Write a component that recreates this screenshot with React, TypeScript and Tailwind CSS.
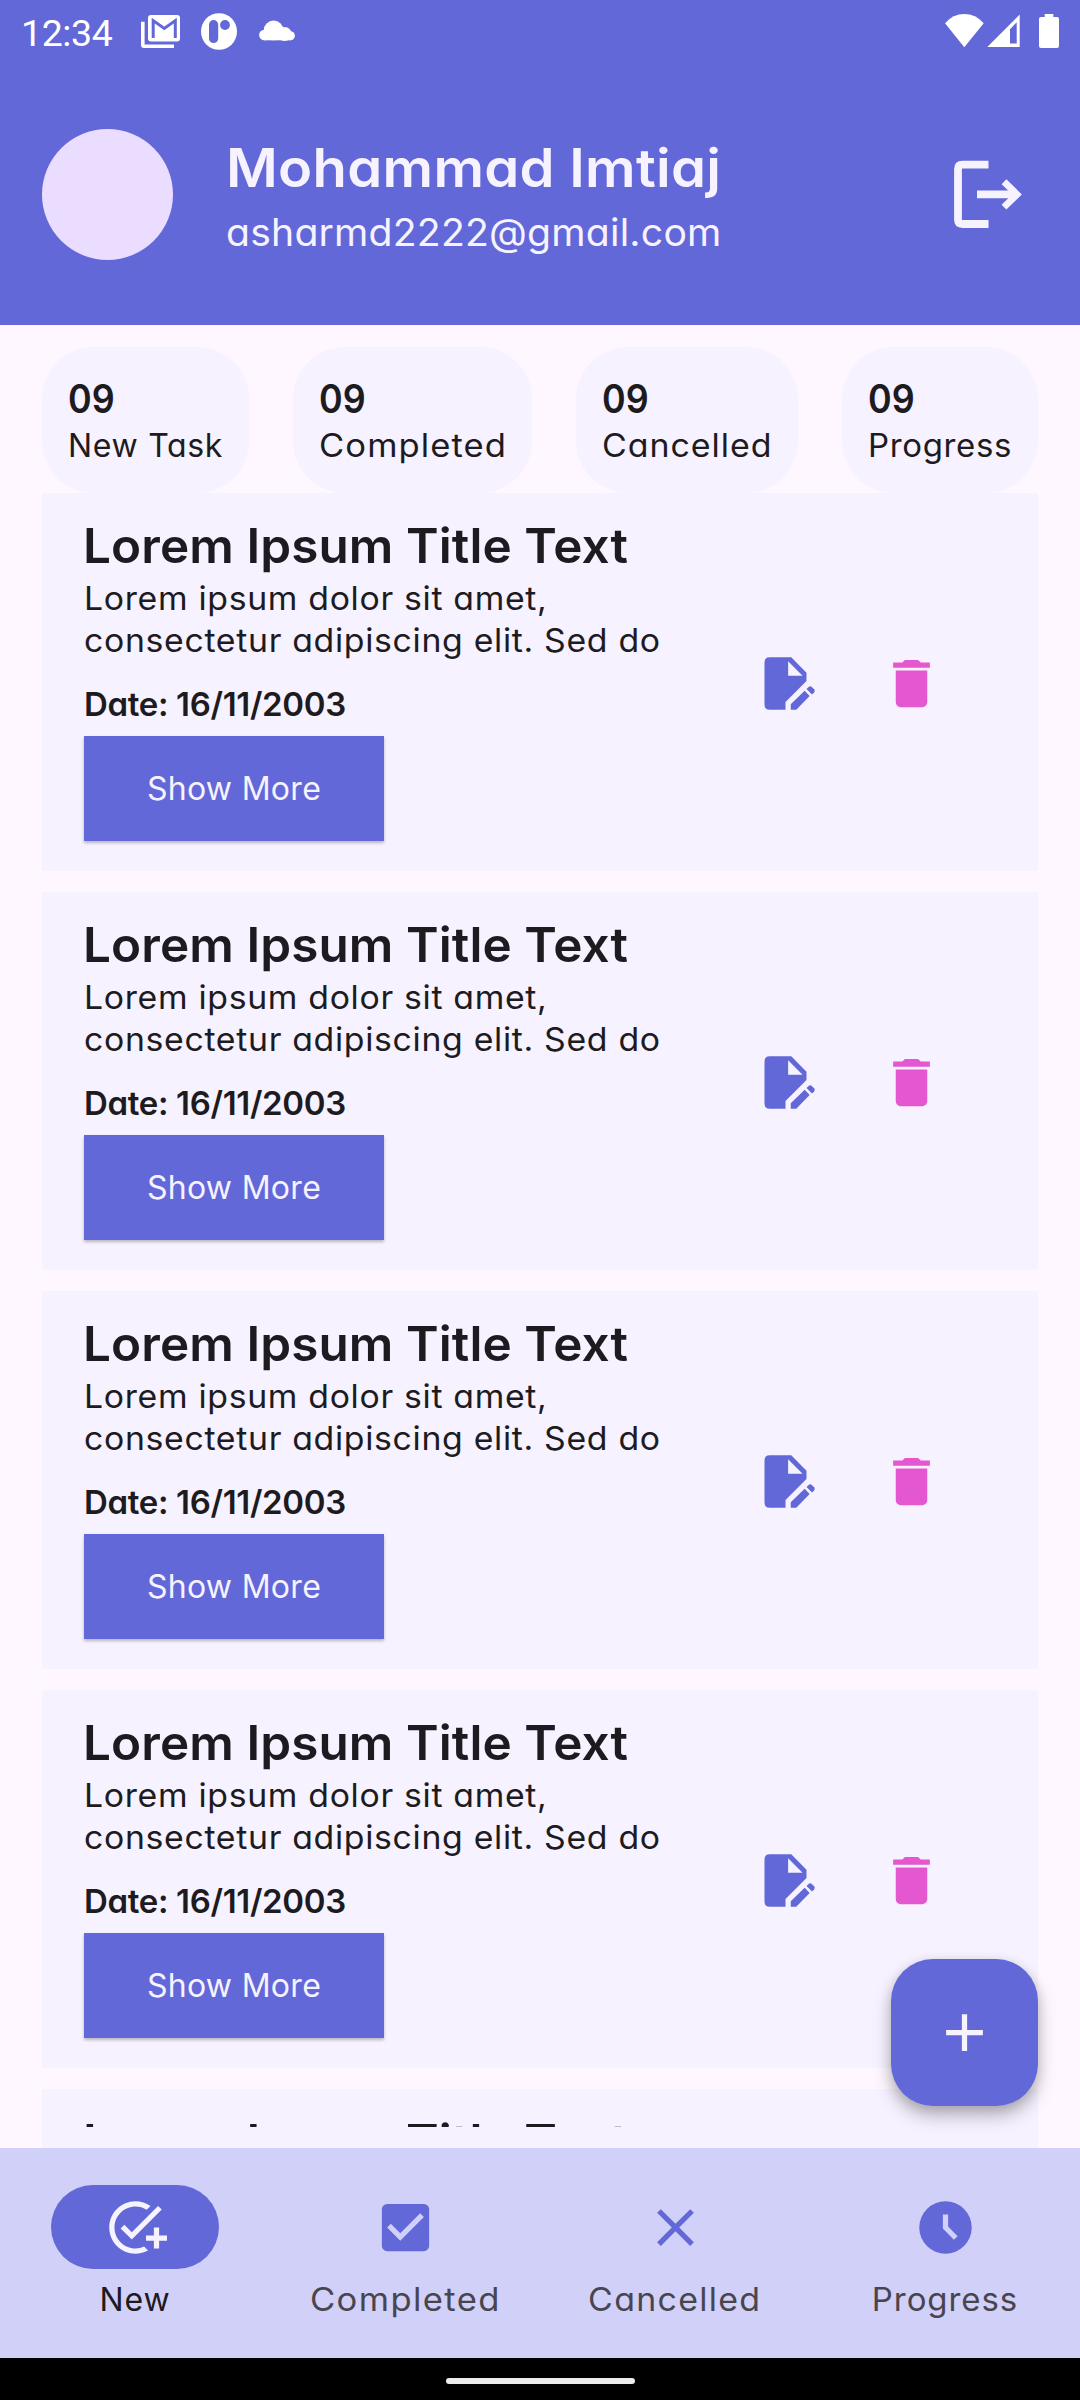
import type { ReactNode } from "react";
import { MdAdd, MdAddTask, MdCheckBox, MdClose, MdDelete } from "react-icons/md";

function StatusBar() {
  return (
    <div className="flex h-[63px] items-start justify-between pl-[21px] pr-[21px] text-white">
      <div className="flex items-start">
        <span className="mt-[12px] w-[120px] font-['Roboto'] text-[37.5px] leading-[43px] tracking-[-0.4px]">12:34</span>
        <svg className="mt-[15px] h-[33px] w-[39px]" viewBox="141 15 39 33" fill="none">
          <path d="M141 21.7h3.6v22.7H174V48H144q-3 0-3-3z" fill="#fff" />
          <rect x="148" y="15" width="32" height="26.5" rx="3" fill="#fff" />
          <path d="M153.2 38V20.6L164.3 28.4 175.3 20.6V38" stroke="#6268D8" strokeWidth="3" />
        </svg>
        <svg className="ml-[21px] mt-[13px] h-[37px] w-[36px]" viewBox="201 13.2 36 37">
          <ellipse cx="219" cy="31.7" rx="18" ry="18.3" fill="#fff" />
          <rect x="209" y="20.3" width="9.2" height="23" rx="4.6" fill="#6268D8" />
          <circle cx="225" cy="25.2" r="4.9" fill="#6268D8" />
        </svg>
        <svg className="ml-[22px] mt-[20px] h-[21px] w-[36px]" viewBox="259 20 36 21" fill="#fff">
          <circle cx="264.3" cy="35" r="5.2" />
          <circle cx="273.6" cy="30.4" r="9.9" />
          <circle cx="284.6" cy="34" r="7" />
          <circle cx="290.4" cy="35.8" r="4.5" />
          <rect x="264" y="32" width="26.5" height="8.3" />
        </svg>
      </div>
      <svg className="mt-[14px] h-[35px] w-[114px]" viewBox="945 14 114 35" fill="#fff">
        <path d="M964.3 47.2 945 23.2Q953 14 964.3 14T983.7 23.2Z" />
        <path fillRule="evenodd" d="M987.3 47 1019.7 14.5V47ZM1010 29.2V43.5H1016.7V22.2Z" />
        <path d="M1044.7 17V14h8.6v3h3.7q2 0 2 2v27q0 2-2 2h-16q-2 0-2-2V19q0-2 2-2z" />
      </svg>
    </div>
  );
}

function Header() {
  return (
    <header className="h-[325.3px] shrink-0 bg-[#6268D8]">
      <StatusBar />
      <div className="flex items-start pl-[42px] pt-[65.5px] text-[#F6F2FF]">
        <div className="size-[131px] rounded-full bg-[#EADDFF]" />
        <div className="ml-[53px] whitespace-nowrap">
          <div className="h-[78px] origin-left scale-x-[1.06] text-[53px] font-semibold leading-[78px] tracking-[0.25px]">Mohammad Imtiaj</div>
          <div className="origin-left scale-x-[1.03] text-[38px] leading-[51px] tracking-[0.2px]">asharmd2222@gmail.com</div>
        </div>
        <svg className="ml-auto mr-[57px] mt-[29.5px] size-[72px]" viewBox="951 158 72 72" fill="none" stroke="#F6F2FF">
          <path d="M988.5 164.7H962.5Q958 164.7 958 169.2V219.5Q958 224 962.5 224H988.5" strokeWidth="7.8" />
          <path d="M977 194.4H1014" strokeWidth="7.8" />
          <path d="M1004 181.7 1017 194.4 1004 207.2" strokeWidth="6.8" />
        </svg>
      </div>
    </header>
  );
}

function StatChip({ label, width, text }: { label: string; width: string; text: string }) {
  return (
    <div className={`h-[146.6px] whitespace-nowrap rounded-[52px] bg-[#F6F2FF] pl-[26px] pt-[27px] ${width}`}>
      <div className="origin-left scale-x-[0.92] text-[39px] font-semibold leading-[50px]">09</div>
      <div className={`mt-[0.5px] w-max origin-left text-[32px] leading-[44px] ${text}`}>{label}</div>
    </div>
  );
}

function EditDocumentIcon() {
  return (
    <svg className="size-[63px]" viewBox="0 0 24 24" fill="#6268D8">
      <path
        fillRule="evenodd"
        d="M6 2H14.2L20 7.9V11L12 19V22H6Q4 22 4 20V4Q4 2 6 2ZM13 3.5V9H18.5Z"
      />
      <path d="M14 22V19.9L19.3 14.8 21.2 16.8 16.1 22Z" />
      <path d="M20 14.1 20.8 13.3Q21.4 12.8 22 13.3L22.9 14.2Q23.4 14.8 22.9 15.4L22.1 16.2Z" />
    </svg>
  );
}

function TaskTitle() {
  return (
    <h2 className="-ml-px h-[63px] w-max origin-left scale-x-[1.03] whitespace-nowrap text-[48px] font-semibold leading-[63px] tracking-[0.1px]">
      Lorem Ipsum Title Text
    </h2>
  );
}

function TaskCard() {
  return (
    <article className="flex h-[378px] shrink-0 items-start justify-between bg-[#F6F2FF] pl-[42px] pr-[95px] pt-[21px]">
      <div className="whitespace-nowrap">
        <TaskTitle />
        <p className="mt-px w-max origin-left scale-x-[1.04] text-[32.5px] leading-[42px] tracking-[0.65px]">
          Lorem ipsum dolor sit amet,
          <br />
          consectetur adipiscing elit. Sed do
        </p>
        <p className="mt-[20.5px] text-[33px] font-semibold leading-[42px] tracking-[-0.33px]">Date: 16/11/2003</p>
        <button className="mt-[11px] flex h-[105px] w-[300px] items-center justify-center bg-[#6268D8] pt-[2px] text-[32px] tracking-[0.3px] text-[#F6F2FF] shadow-[0_2px_3px_rgba(0,0,0,0.25)]">
          Show More
        </button>
      </div>
      <div className="mt-[137.5px] flex gap-[63px]">
        <EditDocumentIcon />
        <MdDelete className="size-[63px] text-[#E557D0]" />
      </div>
    </article>
  );
}

function ClockIcon() {
  return (
    <svg className="size-[63px]" viewBox="0 0 24 24" fill="none">
      <circle cx="12" cy="12" r="10" fill="#6268D8" />
      <path d="M12 7V12L15.9 16" stroke="#D1D0F8" strokeWidth="2" />
    </svg>
  );
}

function NavItem({ icon, label, active, text }: { icon: ReactNode; label: string; active?: boolean; text: string }) {
  return (
    <div className="flex w-[270px] flex-col items-center pt-[37px]">
      <div className={`flex h-[84px] w-[168px] items-center justify-center rounded-full ${active ? "bg-[#6268D8] text-[#F6F2FF]" : "text-[#6268D8]"}`}>
        {icon}
      </div>
      <div className={`mt-[10px] text-[32px] leading-[42px] ${text} ${active ? "text-[#1D1B20]" : "text-[#49454F]"}`}>{label}</div>
    </div>
  );
}

export default function App() {
  return (
    <div className="relative flex h-[2400px] w-[1080px] flex-col overflow-hidden bg-[#FEF7FF] font-['Inter','Noto_Sans',sans-serif] text-[#1D1B20] [font-feature-settings:'cv11']">
      <Header />
      <div className="flex shrink-0 justify-between px-[42px] pt-[21.4px]">
        <StatChip label="New Task" width="w-[207.3px]" text="tracking-[0.69px]" />
        <StatChip label="Completed" width="w-[239.7px]" text="scale-x-[1.08] tracking-[1px]" />
        <StatChip label="Cancelled" width="w-[222.4px]" text="scale-x-[1.06] tracking-[0.92px]" />
        <StatChip label="Progress" width="w-[196.3px]" text="scale-x-[1.03] tracking-[0.65px]" />
      </div>
      <main className="flex min-h-0 flex-1 flex-col gap-[21px] overflow-hidden px-[42px]">
        <TaskCard />
        <TaskCard />
        <TaskCard />
        <TaskCard />
        <div className="flex-1 bg-[#F6F2FF]">
          <div className="h-[38px] overflow-hidden pl-[42px] pt-[21px]">
            <TaskTitle />
          </div>
        </div>
      </main>
      <nav className="flex h-[210px] shrink-0 bg-[#D1D0F8]">
        <NavItem active label="New" text="tracking-[0.9px]" icon={<MdAddTask className="size-[63px]" />} />
        <NavItem label="Completed" text="scale-x-[1.08] tracking-[1.3px]" icon={<MdCheckBox className="size-[63px]" />} />
        <NavItem label="Cancelled" text="scale-x-[1.06] tracking-[1.2px]" icon={<MdClose className="size-[63px]" />} />
        <NavItem label="Progress" text="scale-x-[1.03] tracking-[0.9px]" icon={<ClockIcon />} />
      </nav>
      <div className="flex h-[42px] shrink-0 items-start justify-center bg-black pt-[20px]">
        <div className="h-[6px] w-[189px] rounded-full bg-[#ECECEC]" />
      </div>
      <button className="absolute right-[42px] top-[1959px] flex size-[147px] items-center justify-center rounded-[42px] bg-[#6268D8] text-[#F6F2FF] shadow-[0_10px_18px_rgba(0,0,0,0.25),0_3px_12px_rgba(0,0,0,0.12)]">
        <MdAdd className="size-[63px]" />
      </button>
    </div>
  );
}
